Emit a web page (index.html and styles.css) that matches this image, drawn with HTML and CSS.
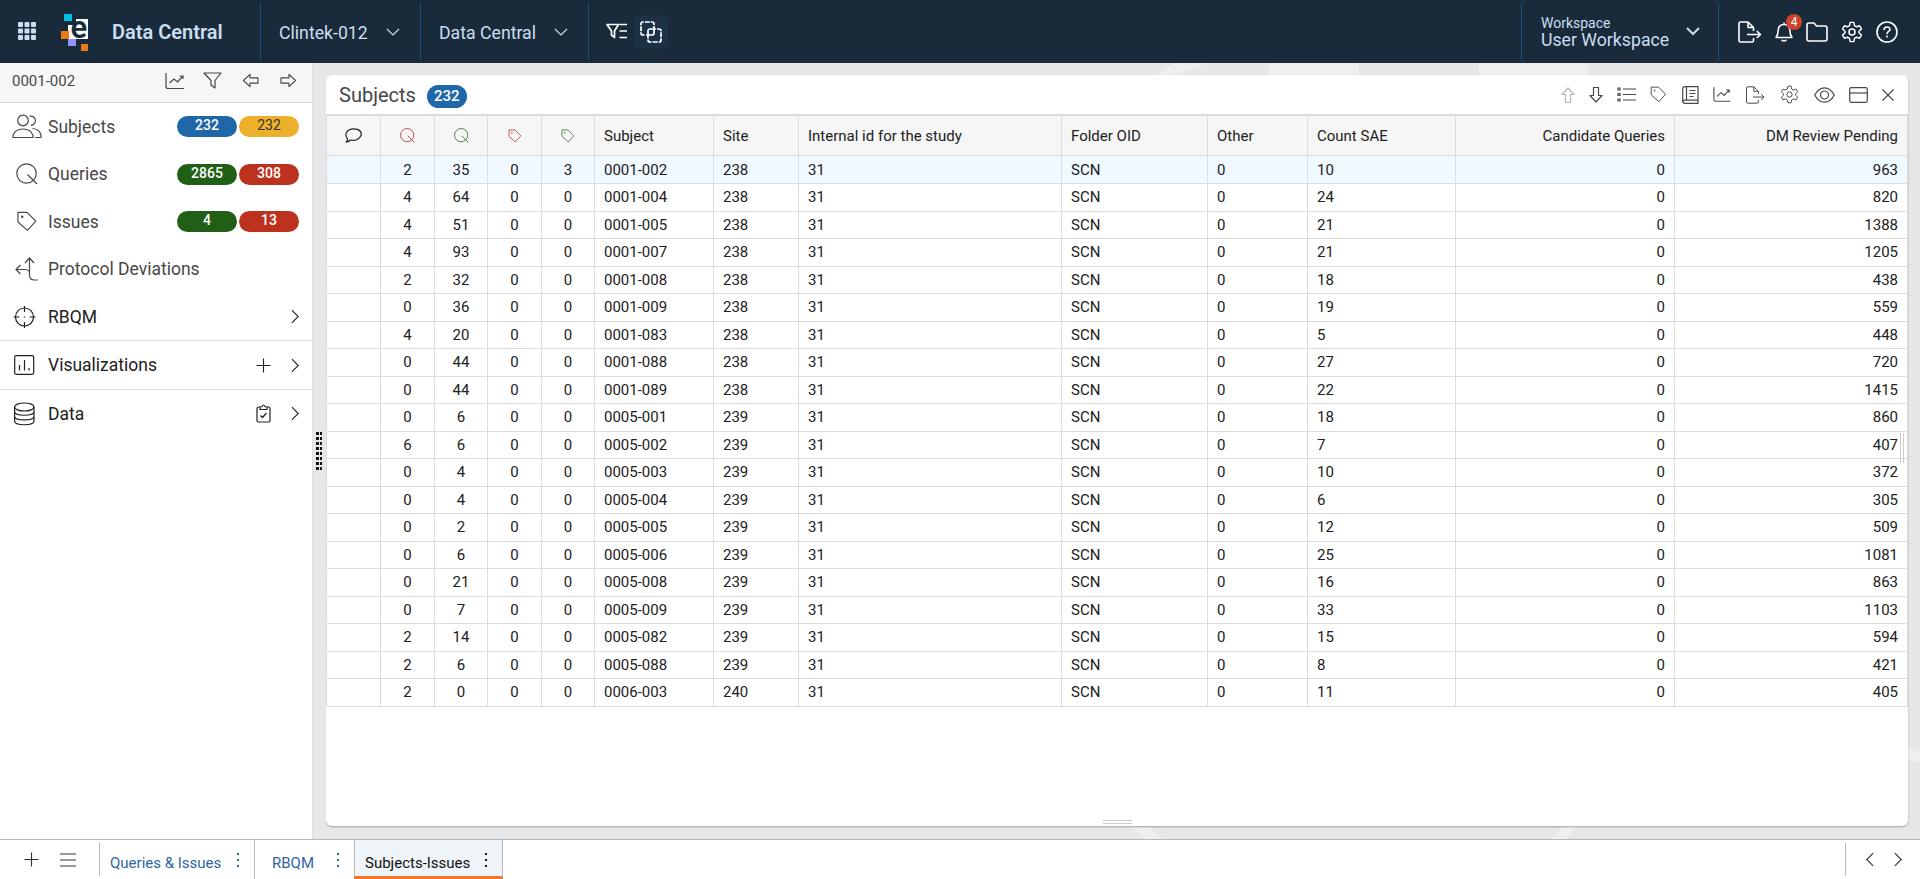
FILE: index.html
```html
<!DOCTYPE html>
<html lang="en">
<head>
    <meta charset="utf-8">
    <title>Data Central</title>
    <link rel="stylesheet" href="styles.css">
</head>
<body>
    <svg class="sprite">
        <symbol id="i-query" viewBox="0 0 22 22"><circle cx="10.5" cy="10.5" r="9.7"/><path d="M11.5 11.5l9.5 9.5"/></symbol>
        <symbol id="i-tag" viewBox="0 0 22 22"><path d="M1.5 1.5h9.5l9.2 9.2-8.7 9.6L1.5 11.5z" stroke-linejoin="round"/><circle cx="6" cy="6" r=".7"/></symbol>
        <symbol id="i-chart" viewBox="0 0 20 18"><path d="M1 1v13.5q0 2 2 2h16M4.5 11l4.5-4 3.5 3 5.5-6M14.5 4h3.5v3"/></symbol>
        <symbol id="i-gear" viewBox="0 0 24 24"><circle cx="12" cy="12" r="3.3"/><path stroke-linejoin="round" d="M10 1.500h4l.7 3.500 2.300 1.300 3.300-1.100 2 3.500-2.700 2.400v1.800l2.700 2.400-2 3.500-3.300-1.100-2.300 1.300L14 22.500h-4L9.300 19 7 17.700l-3.300 1.100-2-3.500 2.700-2.400v-1.800L1.700 8.700l2-3.500L7 6.300 9.300 5z"/></symbol>
        <symbol id="i-export" viewBox="0 0 24 22"><path stroke-linejoin="round" d="M15.5 17v2.500q0 1.500-1.500 1.500H2.500Q1 21 1 19.500v-17Q1 1 2.500 1H10l5.500 5.500V10M10 1v5.500h5.500M9 13.500h13.500M18.800 10l3.700 3.500-3.700 3.500"/></symbol>
        <symbol id="i-arrow" viewBox="0 0 18 16"><path stroke-linejoin="round" d="M1 5.200h8.500V1.500l7 6.500-7 6.500v-3.700H1z"/></symbol>
        <symbol id="i-right" viewBox="0 0 10 16"><path d="M1 1l7 7-7 7"/></symbol>
        <symbol id="i-down" viewBox="0 0 14 9"><path d="M1 1l6 6 6-6"/></symbol>
        <symbol id="i-plus" viewBox="0 0 16 16"><path d="M8 .5v15M.5 8h15"/></symbol>
    </svg>

    <header class="topbar">
        <svg class="apps" width="19" height="19"><g fill="#c9def2"><rect width="5" height="5" rx="1"/><rect x="6.5" width="5" height="5" rx="1"/><rect x="13" width="5" height="5" rx="1"/><rect y="6.5" width="5" height="5" rx="1"/><rect x="6.5" y="6.5" width="5" height="5" rx="1"/><rect x="13" y="6.5" width="5" height="5" rx="1"/><rect y="13" width="5" height="5" rx="1"/><rect x="6.5" y="13" width="5" height="5" rx="1"/><rect x="13" y="13" width="5" height="5" rx="1"/></g></svg>
        <svg class="logo" width="28" height="38">
            <rect x="3" width="8" height="7" fill="#00c2de"/>
            <path fill="#fff" d="M15 5h12v20H7V11h8z"/>
            <rect y="17" width="8" height="8" fill="#ec7a16"/>
            <rect x="7" y="25" width="8" height="7" fill="#9591fb"/>
            <rect x="20" y="30" width="7" height="7" fill="#ec7a16"/>
            <text x="9.5" y="24">e</text>
        </svg>
        <div class="brand">Data Central</div>
        <div class="picker study">Clintek-012 <svg width="14" height="9"><use href="#i-down"/></svg></div>
        <div class="picker module">Data Central <svg width="14" height="9"><use href="#i-down"/></svg></div>
        <div class="view-tools">
            <svg width="22" height="18" viewBox="0 0 22 18"><path d="M1 1.500h11.500L8.500 8v6.500L5.500 12V8zM13.500 1.500H21M13.500 8H21M13.500 14.500H21" stroke-linejoin="round"/></svg>
            <div class="overlap"><svg width="22" height="22" viewBox="0 0 22 22"><path d="M14 4V3q0-2-2-2H3Q1 1 1 3v9q0 2 2 2h2" stroke-dasharray="5 1"/><path d="M17 8h2q2 0 2 2v9q0 2-2 2h-9q-2 0-2-2v-2" stroke-dasharray="5 1"/><path d="M8 17V10q0-2 2-2h6M14 5v7q0 2-2 2H6"/></svg></div>
        </div>
        <div class="workspace">
            <div><small>Workspace</small>User Workspace</div>
            <svg width="14" height="9"><use href="#i-down"/></svg>
        </div>
        <div class="user-tools">
            <svg width="24" height="22"><use href="#i-export"/></svg>
            <div class="bell">
                <svg width="18" height="20" viewBox="0 0 18 20"><path stroke-linejoin="round" d="M1 15.500c2-2.500 2-4 2.200-7.500C3.500 4.500 5.500 2.500 9 2.500s5.500 2 5.800 5.500c.2 3.500.2 5 2.200 7.500zM9 .5v2M6.500 18q2.500 2 5 0"/></svg>
                <span>4</span>
            </div>
            <svg width="22" height="20" viewBox="0 0 22 20"><path stroke-linejoin="round" d="M1 17V3q0-2 2-2h5l2.500 3H19q2 0 2 2v11q0 2-2 2H3q-2 0-2-2z"/></svg>
            <svg width="22" height="22"><use href="#i-gear"/></svg>
            <svg width="22" height="22" viewBox="0 0 22 22"><circle cx="11" cy="11" r="10"/><path d="M8 9c0-4 6-4 6-.5 0 2-3 2-3 4.500M11 14.500v2"/></svg>
        </div>
    </header>

    <main>
        <aside class="sidebar">
            <div class="side-head">
                <span>0001-002</span>
                <svg class="trend" width="20" height="18"><use href="#i-chart"/></svg>
                <svg class="funnel" width="19" height="17" viewBox="0 0 19 17"><path stroke-linejoin="round" d="M1 1h17l-6 7.500V16l-4-3V8.500z"/></svg>
                <svg class="back" width="17" height="15"><use href="#i-arrow"/></svg>
                <svg width="17" height="15"><use href="#i-arrow"/></svg>
            </div>
            <div class="side-row">
                <svg width="30" height="25" viewBox="0 0 30 25"><circle cx="11" cy="6.500" r="5.300"/><path d="M1 23.500v-2Q3 15 11 15t10 6.500v2zM17.500 2.300a4.600 4.600 0 1 1 1.500 9M20.500 14.500q7 .5 8.500 6.500v2.500h-6"/></svg>
                <b>Subjects</b><i class="pill blue">232</i><i class="pill yellow">232</i>
            </div>
            <div class="side-row">
                <svg width="30" height="22"><use href="#i-query"/></svg>
                <b>Queries</b><i class="pill green">2865</i><i class="pill red">308</i>
            </div>
            <div class="side-row">
                <svg width="30" height="21"><use href="#i-tag"/></svg>
                <b>Issues</b><i class="pill green">4</i><i class="pill red">13</i>
            </div>
            <div class="side-row">
                <svg width="30" height="24" viewBox="0 0 30 24"><path d="M17.500 1v17q0 5 4.500 5h4M13 6l4.500-5L22 6M17.500 15q-1.500-2.500-4-2.500H4M8.500 8L4 12.500 8.500 17"/></svg>
                <b>Protocol Deviations</b>
            </div>
            <div class="side-row group rbqm-group">
                <svg width="24" height="24" viewBox="0 0 24 24"><circle cx="12.500" cy="12" r="9"/><path d="M12.500 1v6M12.500 17v6M1.500 12h6M17.500 12h6M11.800 12h1.400"/></svg>
                <b>RBQM</b>
                <svg width="9" height="15"><use href="#i-right"/></svg>
            </div>
            <div class="side-row group">
                <svg width="24" height="20" viewBox="0 0 24 20"><rect x="2.700" y=".7" width="19" height="18.600" rx="1.500"/><path d="M7.500 15.500V10M12.500 15.500V5M17 15.500V13"/></svg>
                <b>Visualizations</b>
                <svg class="extra" width="15" height="15"><use href="#i-plus"/></svg>
                <svg width="9" height="15"><use href="#i-right"/></svg>
            </div>
            <div class="side-row group">
                <svg width="24" height="24" viewBox="0 0 24 24"><ellipse cx="12.300" cy="5" rx="9.700" ry="4"/><path d="M2.600 5v14c0 5 19.400 5 19.400 0V5M2.600 9.500c0 5 19.400 5 19.400 0M2.600 14.200c0 5 19.400 5 19.400 0"/></svg>
                <b>Data</b>
                <svg class="extra" width="15" height="19" viewBox="0 0 15 19"><path stroke-linejoin="round" d="M4 3H2.500Q1 3 1 4.500v12Q1 18 2.500 18h10q1.500 0 1.500-1.500v-12Q14 3 12.500 3H11M4 5.500V3l2-.5q1.500-3 3 0l2 .5v2.500zM4.500 11.500l2 2 4-4.500"/></svg>
                <svg width="9" height="15"><use href="#i-right"/></svg>
            </div>
        </aside>

        <div class="splitter"><span></span></div>

        <section class="stage">
            <svg class="backdrop" width="1594" height="776"><path d="M849 0h34l-34 12h-20zM943 0h89v12h-89zM1152 0h110v12h-110zM806 764h18l13 12h-17zM1236 763h14l-9 13h-15zM1582 685l12 4v11l-12-4z"/></svg>
            <div class="panel">
                <div class="panel-head">
                    <h1>Subjects</h1>
                    <span class="total">232</span>
                    <div class="panel-tools">
                        <svg class="off" width="14" height="16" viewBox="0 0 14 16"><path stroke-linejoin="round" d="M4.500 15.500V7.500H1L7 1l6 6.500H9.500v8z"/></svg>
                        <svg width="14" height="16" viewBox="0 0 14 16"><path stroke-linejoin="round" d="M4.500.5v8H1L7 15l6-6.500H9.500v-8z"/></svg>
                        <svg width="19" height="15" viewBox="0 0 19 15"><path d="M6 2h13M6 7.500h13M6 13h13"/><path d="M1 1h2v2H1zM1 6.500h2v2H1zM1 12h2v2H1z"/></svg>
                        <svg width="17" height="17"><use href="#i-tag"/></svg>
                        <svg width="17" height="18" viewBox="0 0 17 18"><path d="M3 .7h13v16.600H3q-2.300 0-2.300-2V3Q.7.700 3 .7zM4.500.7v13.500M1 15.500q.5-1.300 2-1.300h13M7.500 4.500h6M7.500 7.500h6M7.500 10.500h4"/></svg>
                        <svg width="18" height="17"><use href="#i-chart"/></svg>
                        <svg width="21" height="18"><use href="#i-export"/></svg>
                        <svg width="19" height="19"><use href="#i-gear"/></svg>
                        <svg width="21" height="16" viewBox="0 0 21 16"><path d="M.7 8Q4.500.8 10.500.8T20.300 8Q16.500 15.200 10.500 15.200T.7 8z"/><circle cx="10.500" cy="8" r="4"/></svg>
                        <svg width="19" height="16" viewBox="0 0 19 16"><rect x=".7" y=".7" width="17.600" height="14.600" rx="1.500"/><path d="M.7 6h17.600"/></svg>
                        <svg width="12" height="12" viewBox="0 0 12 12"><path d="M.5.500l11 11M11.500.500l-11 11"/></svg>
                    </div>
                </div>
                <div class="grid" id="grid">
                    <div class="row head">
                        <div><svg width="17" height="15" viewBox="0 0 17 15"><path stroke-linejoin="round" d="M1 14q2-1.500 1.500-3C-1 6 2 .8 8.500.8S17 4.500 16 7.500s-6 6-10.500 4.500Q3.500 14 1 14z"/></svg></div>
                        <div class="bad"><svg width="15" height="15"><use href="#i-query"/></svg></div>
                        <div class="good"><svg width="15" height="15"><use href="#i-query"/></svg></div>
                        <div class="bad"><svg width="14" height="14"><use href="#i-tag"/></svg></div>
                        <div class="good"><svg width="14" height="14"><use href="#i-tag"/></svg></div>
                        <div>Subject</div>
                        <div>Site</div>
                        <div>Internal id for the study</div>
                        <div>Folder OID</div>
                        <div>Other</div>
                        <div>Count SAE</div>
                        <div>Candidate Queries</div>
                        <div>DM Review Pending</div>
                    </div>
                </div>
                <span class="resize-x"></span>
                <span class="resize-y"></span>
            </div>
        </section>
    </main>

    <footer class="tabs">
        <svg width="15" height="15"><use href="#i-plus"/></svg>
        <svg class="menu" width="16" height="14" viewBox="0 0 16 14"><path d="M0 1h16M0 7h16M0 13h16"/></svg>
        <div class="tab first">Queries &amp; Issues<span class="dots"></span></div>
        <div class="tab rbqm">RBQM<span class="dots"></span></div>
        <div class="tab active">Subjects-Issues<span class="dots"></span></div>
        <div class="pager">
            <svg class="back" width="9" height="15"><use href="#i-right"/></svg>
            <svg width="9" height="15"><use href="#i-right"/></svg>
        </div>
    </footer>

    <script src="script.js"></script>
</body>
</html>
```
FILE: styles.css
```css
* {
    box-sizing: border-box;
}
body {
    margin: 0;
    height: 100vh;
    display: flex;
    flex-direction: column;
    overflow: hidden;
    background: #fff;
    color: #212121;
    font-family: Roboto, "Liberation Sans", sans-serif;
    font-size: 15px;
}
svg {
    flex: none;
    display: block;
    fill: none;
    stroke: currentColor;
    stroke-width: 1.2;
}
.sprite {
    position: absolute;
    width: 0;
    height: 0;
}
.back {
    transform: scaleX(-1);
}

/* top bar */
.topbar {
    flex: none;
    height: 63px;
    display: flex;
    align-items: center;
    background: #192b3a;
    color: #c9def2;
    font-size: 17.7px;
}
.apps {
    margin: 0 24px 0 18px;
    stroke: none;
}
.logo {
    stroke: none;
    margin-top: 2px;
}
.logo text {
    font: 600 31px Roboto, sans-serif;
    fill: #192b3a;
}
.brand {
    width: 148px;
    margin-left: 23px;
    font-size: 20px;
    font-weight: 600;
}
.picker {
    height: 57px;
    display: flex;
    align-items: center;
    justify-content: space-between;
    padding: 2px 20px 0 18px;
    border-left: 1px solid #1f4f7c;
}
.study {
    width: 160px;
}
.module {
    width: 168px;
}
.view-tools {
    height: 57px;
    display: flex;
    align-items: center;
    padding-left: 17px;
    border-left: 1px solid #1f4f7c;
    color: #fff;
}
.view-tools svg {
    stroke-width: 1.7;
}
.overlap {
    margin-left: 6px;
    padding: 6px;
    border-radius: 5px;
    background: #1b3145;
}
.workspace {
    height: 62px;
    width: 198px;
    margin-left: auto;
    display: flex;
    align-items: center;
    justify-content: space-between;
    padding: 0 18px 0 19px;
    border: solid #1f4f7c;
    border-width: 0 1px;
    border-radius: 5px;
    line-height: 17px;
}
.workspace small {
    display: block;
    font-size: 14px;
}
.workspace svg {
    stroke-width: 2;
}
.user-tools {
    display: flex;
    align-items: center;
    gap: 13px;
    padding: 0 22px 0 19px;
    color: #fff;
}
.user-tools svg {
    stroke-width: 1.6;
}
.bell {
    position: relative;
}
.bell span {
    position: absolute;
    top: -8px;
    left: 11px;
    width: 16px;
    height: 16px;
    border-radius: 50%;
    background: #cd442b;
    font-size: 12px;
    line-height: 16px;
    text-align: center;
}

/* sidebar */
main {
    flex: 1;
    display: flex;
    min-height: 0;
}
.sidebar {
    width: 312px;
    color: #474747;
}
.side-head {
    height: 40px;
    display: flex;
    align-items: center;
    padding: 0 15px 4px 12px;
    gap: 21px;
    border-bottom: 1px solid #dcdcdc;
    background: #f6f6f6;
}
.side-head span {
    margin-right: auto;
}
.trend {
    margin-right: -3px;
}
.funnel {
    margin-right: -1px;
}
.side-row {
    height: 47.5px;
    display: flex;
    align-items: center;
    padding: 0 13px 0 12px;
    font-size: 17.5px;
}
.side-row b {
    margin-right: auto;
    font-weight: 400;
    padding-left: 6px;
}
.side-row.group {
    height: 49px;
    padding-right: 12px;
    border-bottom: 1px solid #dcdcdc;
    color: #212121;
}
.side-row.rbqm-group {
    height: 48px;
}
.side-row.group:last-child {
    height: 47px;
    border: 0;
}
.side-row.group b {
    padding-left: 12px;
}
.extra {
    margin-right: 20px;
}
.pill {
    width: 60px;
    height: 21px;
    margin-left: 2px;
    border-radius: 11px;
    color: #fff;
    font-size: 14px;
    font-style: normal;
    font-weight: 500;
    line-height: 19px;
    text-align: center;
}
.blue {
    background: #1f67a9;
}
.yellow {
    background: #edb02b;
    color: #333;
    font-weight: 400;
}
.green {
    background: #215f17;
}
.red {
    background: #bd321e;
}
.splitter {
    width: 14px;
    background: #e7e7e7;
    border-left: 1px solid #dfdfdf;
}
.splitter span {
    display: block;
    width: 6px;
    height: 38px;
    margin: 369px 0 0 3px;
    background: repeating-linear-gradient(#111 0 3px, transparent 3px 5px);
    mask: linear-gradient(90deg, #000 3px, transparent 3px 4px, #000 4px);
}

/* panel */
.stage {
    position: relative;
    flex: 1;
    padding: 12px 12px 13px 0;
    background: #e7e7e7;
    overflow: hidden;
}
.backdrop {
    position: absolute;
    top: 0;
    left: 0;
    fill: #efefef;
    stroke: none;
}
.panel {
    position: relative;
    height: 100%;
    border-radius: 6px;
    background: #fff;
    box-shadow: 0 1px 2px rgba(0, 0, 0, .3);
}
.panel-head {
    height: 39px;
    display: flex;
    align-items: center;
    padding: 0 14px 0 13px;
    color: #474747;
}
h1 {
    margin: 0;
    font-size: 20px;
    font-weight: 400;
}
.total {
    width: 40px;
    height: 23px;
    margin: 4px 0 0 11px;
    border-radius: 12px;
    background: #1f67a9;
    color: #fff;
    font-size: 15px;
    font-weight: 500;
    line-height: 22px;
    text-align: center;
}
.panel-tools {
    display: flex;
    align-items: center;
    gap: 14.25px;
    margin-left: auto;
}
.off {
    opacity: .4;
}
.grid {
    border: solid #dcdcdc;
    border-width: 2px 0 0 1px;
}
.row {
    display: grid;
    grid-template-columns: 54px 54px 53px 54px 53px 119px 85px 263px 146px 100px 148px 219px 233px;
    height: 27.5px;
}
.row div {
    display: flex;
    align-items: center;
    border: solid #dcdcdc;
    border-width: 0 1px 1px 0;
    padding: 0 9px;
}
.row div:nth-child(-n+5) {
    justify-content: center;
    padding: 0;
}
.row div:nth-child(n+12) {
    justify-content: flex-end;
}
.head {
    height: 40px;
    background: #f6f6f6;
}
.selected {
    height: 28px;
    background: #f0f9ff;
}
.row .bad {
    color: #b5302a;
}
.row .good {
    color: #2e6b2a;
}
.resize-x,
.resize-y {
    position: absolute;
    border: solid #ccc;
}
.resize-x {
    right: 4px;
    top: 358px;
    width: 4px;
    height: 30px;
    border-width: 0 1px;
}
.resize-y {
    left: 777px;
    bottom: 2px;
    width: 29px;
    height: 4px;
    border-width: 1px 0;
}

/* bottom tabs */
.tabs {
    flex: none;
    height: 40px;
    display: flex;
    align-items: center;
    padding-left: 24px;
    border-top: 1px solid #b8b8b8;
    color: #333;
}
.menu {
    margin: 0 23px 0 21px;
}
.tab {
    height: 39px;
    display: flex;
    align-items: center;
    justify-content: space-between;
    padding: 6px 15px 0 17px;
    color: #2f659f;
}
.tab.first {
    width: 155px;
    height: 33px;
    padding: 6px 15px 0 10px;
    border-left: 1px solid #b8b8b8;
}
.tab.rbqm {
    width: 100px;
    border-left: 1px solid #b8b8b8;
}
.tab.active {
    width: 149px;
    padding: 9px 15px 0 10px;
    border: solid #b8b8b8;
    border-width: 0 1px;
    border-bottom: 3px solid #f4762a;
    background: #eff4f9;
    color: #111;
}
.dots {
    width: 2px;
    height: 14px;
    margin-bottom: 6px;
    background: repeating-linear-gradient(currentColor 0 2px, transparent 2px 6px);
}
.pager {
    height: 33px;
    width: 75px;
    margin-left: auto;
    display: flex;
    align-items: center;
    gap: 20px;
    padding-left: 19px;
    border-left: 1px solid #b8b8b8;
}
```
FILE: script.js
```js
// red queries, green queries, red issues, green issues, subject, site, count SAE, DM review pending
var rows = [
    [2, 35, 0, 3, "0001-002", 238, 10, 963],
    [4, 64, 0, 0, "0001-004", 238, 24, 820],
    [4, 51, 0, 0, "0001-005", 238, 21, 1388],
    [4, 93, 0, 0, "0001-007", 238, 21, 1205],
    [2, 32, 0, 0, "0001-008", 238, 18, 438],
    [0, 36, 0, 0, "0001-009", 238, 19, 559],
    [4, 20, 0, 0, "0001-083", 238, 5, 448],
    [0, 44, 0, 0, "0001-088", 238, 27, 720],
    [0, 44, 0, 0, "0001-089", 238, 22, 1415],
    [0, 6, 0, 0, "0005-001", 239, 18, 860],
    [6, 6, 0, 0, "0005-002", 239, 7, 407],
    [0, 4, 0, 0, "0005-003", 239, 10, 372],
    [0, 4, 0, 0, "0005-004", 239, 6, 305],
    [0, 2, 0, 0, "0005-005", 239, 12, 509],
    [0, 6, 0, 0, "0005-006", 239, 25, 1081],
    [0, 21, 0, 0, "0005-008", 239, 16, 863],
    [0, 7, 0, 0, "0005-009", 239, 33, 1103],
    [2, 14, 0, 0, "0005-082", 239, 15, 594],
    [2, 6, 0, 0, "0005-088", 239, 8, 421],
    [2, 0, 0, 0, "0006-003", 240, 11, 405]
];

var grid = document.getElementById("grid");

rows.forEach(function (r, i) {
    var cells = ["", r[0], r[1], r[2], r[3], r[4], r[5], 31, "SCN", 0, r[6], 0, r[7]];
    var row = document.createElement("div");
    row.className = i === 0 ? "row selected" : "row";
    cells.forEach(function (value) {
        var cell = document.createElement("div");
        cell.textContent = value;
        row.appendChild(cell);
    });
    grid.appendChild(row);
});
```
